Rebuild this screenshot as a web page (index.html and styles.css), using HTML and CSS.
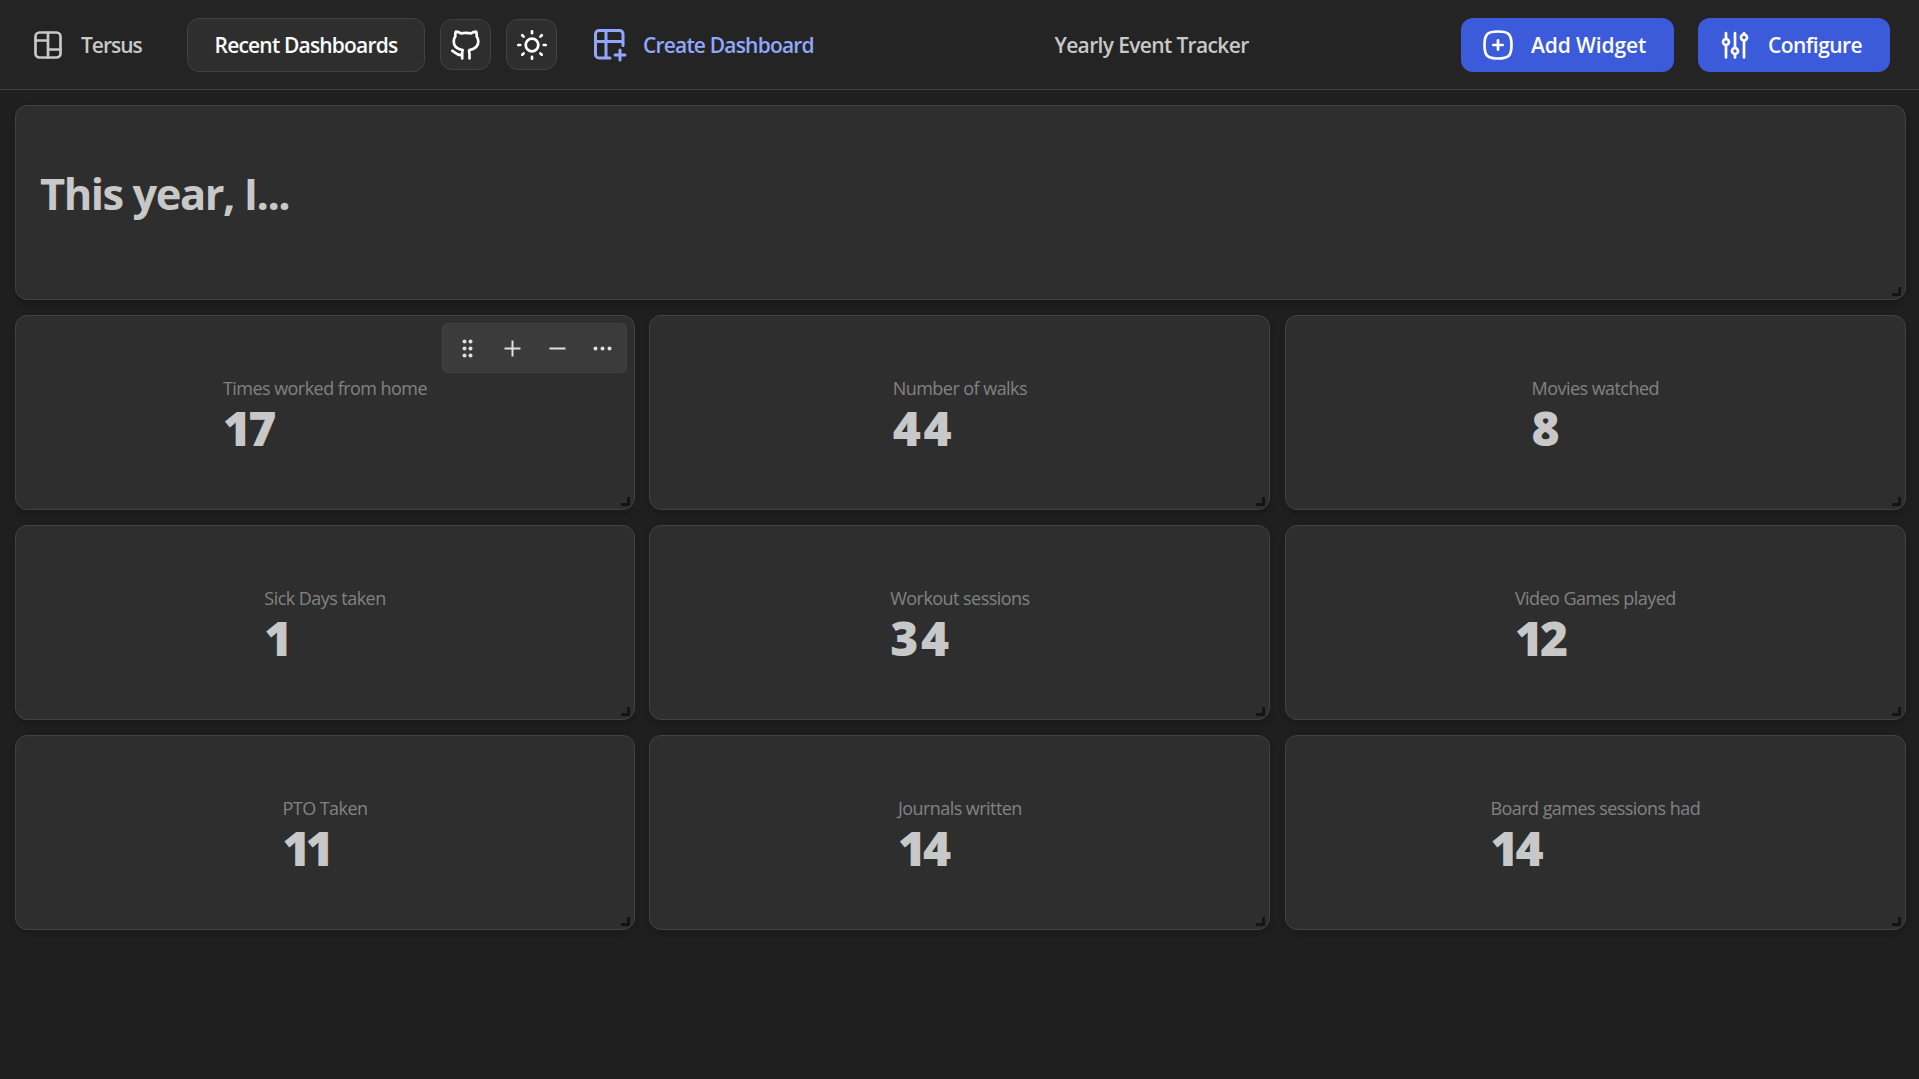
FILE: index.html
```html
<!DOCTYPE html>
<html lang="en">
<head>
<meta charset="utf-8">
<title>Tersus</title>
<link rel="stylesheet" href="styles.css">
</head>
<body>
<header class="topbar">
  <div class="brand">
    <svg class="icon brand-icon" viewBox="0 0 30 30"><rect x="2.5" y="2.5" width="25" height="25" rx="4"/><path d="M15 2.5v25M2.5 10.5H15M15 19.5h12.500"/></svg>
    <span class="t-brand">Tersus</span>
  </div>
  <button class="btn btn-recent"><span class="t-recent">Recent Dashboards</span></button>
  <button class="btn-square" aria-label="GitHub">
    <svg class="icon" viewBox="0 0 30 30"><path d="M11.200 28.500v-4.500c0-1.500-.2-2.800.5-3.800-5.500-1-9-3.700-9-8.700 0-2.300.6-3.700 1.700-5.200-.2-1.500-.2-3.200.5-4.700 2 .1 3.500.7 4.700 1.700 3.500-.6 7.300-.6 10.800 0 1.200-1 2.700-1.600 4.700-1.700.7 1.500.7 3.200.5 4.700 1.100 1.500 1.700 2.900 1.700 5.200 0 5-3.500 7.700-9 8.700-.7.400.2 2.300.2 3.800v4.500M1.300 20.800c2.500 1 3.500 4.700 9.700 4.200"/></svg>
  </button>
  <button class="btn-square" aria-label="Theme">
    <svg class="icon sun" viewBox="0 0 30 30"><circle cx="15" cy="15" r="6.300"/><path d="M15 1.300v1.900M15 26.800v1.900M1.300 15h1.900M26.800 15h1.900M5.300 5.300l1.300 1.300M23.400 23.400l1.300 1.300M5.300 24.700l1.300-1.300M23.400 6.600l1.300-1.300"/></svg>
  </button>
  <div class="create">
    <svg class="icon create-icon" viewBox="0 0 33 33"><path d="M16 29H5a3.500 3.500 0 0 1-3.500-3.500v-20.500A3.500 3.500 0 0 1 5 1.500h20.500a3.500 3.500 0 0 1 3.500 3.500v11.500M1.500 12.500h27.500M12 1.500v27.500M26 21v10M21 26h10"/></svg>
    <span class="t-create">Create Dashboard</span>
  </div>
  <div class="page-title"><span class="t-title">Yearly Event Tracker</span></div>
  <button class="btn btn-primary btn-add">
    <svg class="icon" viewBox="0 0 30 30"><path d="M15 1.500c10.800 0 13.500 2.700 13.500 13.500S25.800 28.500 15 28.500 1.500 25.800 1.500 15 4.200 1.500 15 1.500zM10.300 15h9.400M15 10.300v9.400"/></svg>
    <span class="t-add">Add Widget</span>
  </button>
  <button class="btn btn-primary btn-configure">
    <svg class="icon" viewBox="0 0 30 30"><path d="M6 3v6M6 15v12.500M15 3v15M15 24v3.500M24 3v1.500M24 10.500v17"/><circle cx="6" cy="12" r="3"/><circle cx="15" cy="21" r="3"/><circle cx="24" cy="7.500" r="3"/></svg>
    <span class="t-configure">Configure</span>
  </button>
</header>
<main class="grid">
  <section class="card card-wide"><h1 class="heading">This year, I...</h1></section>
  <section class="card">
    <div class="stat"><span class="label">Times worked from home</span><span class="value value-snug">17</span></div>
    <div class="toolbar">
      <svg class="tool" viewBox="0 0 23 23"><g fill="currentColor"><circle cx="8.500" cy="4.500" r="2"/><circle cx="14.500" cy="4.500" r="2"/><circle cx="8.500" cy="11.500" r="2"/><circle cx="14.500" cy="11.500" r="2"/><circle cx="8.500" cy="18.500" r="2"/><circle cx="14.500" cy="18.500" r="2"/></g></svg>
      <svg class="tool" viewBox="0 0 23 23"><path d="M3.500 11.500h16M11.500 3.500v16" stroke="currentColor" stroke-width="2"/></svg>
      <svg class="tool" viewBox="0 0 23 23"><path d="M3.500 11.500h16" stroke="currentColor" stroke-width="2"/></svg>
      <svg class="tool" viewBox="0 0 23 23"><g fill="currentColor"><circle cx="4.500" cy="11.500" r="2"/><circle cx="11.500" cy="11.500" r="2"/><circle cx="18.500" cy="11.500" r="2"/></g></svg>
    </div>
  </section>
  <section class="card"><div class="stat"><span class="label">Number of walks</span><span class="value value-loose">44</span></div></section>
  <section class="card"><div class="stat"><span class="label">Movies watched</span><span class="value">8</span></div></section>
  <section class="card"><div class="stat"><span class="label">Sick Days taken</span><span class="value">1</span></div></section>
  <section class="card"><div class="stat"><span class="label">Workout sessions</span><span class="value value-loose">34</span></div></section>
  <section class="card"><div class="stat"><span class="label">Video Games played</span><span class="value value-snug">12</span></div></section>
  <section class="card"><div class="stat"><span class="label">PTO Taken</span><span class="value value-tight">11</span></div></section>
  <section class="card"><div class="stat"><span class="label">Journals written</span><span class="value value-snug">14</span></div></section>
  <section class="card"><div class="stat"><span class="label">Board games sessions had</span><span class="value value-snug">14</span></div></section>
</main>
</body>
</html>
```
FILE: styles.css
```css
*, *::after { box-sizing: border-box; }
body {
  margin: 0;
  height: 100vh;
  overflow: hidden;
  background: #1f1f1f;
  color: #c8c8c8;
  font-family: "Open Sans", "Noto Sans", sans-serif;
}
button { margin: 0; font: inherit; color: #fff; }
.topbar {
  display: flex;
  align-items: center;
  height: 90px;
  padding: 0 29px 0 33px;
  background: #242424;
  border-bottom: 1px solid #424242;
  font-size: 21px;
  font-weight: 600;
  letter-spacing: -.65px;
  white-space: nowrap;
}
.icon {
  width: 30px;
  height: 30px;
  flex: none;
  fill: none;
  stroke: currentColor;
  stroke-width: 2.700;
  stroke-linecap: round;
  stroke-linejoin: round;
}
.brand { display: flex; align-items: center; gap: 18px; width: 154px; }
.t-brand { letter-spacing: -1px; }
.t-recent, .t-create { letter-spacing: -.82px; }
.t-add { letter-spacing: -.1px; }
.t-configure { letter-spacing: -.55px; }
.btn {
  display: flex;
  align-items: center;
  height: 54px;
  border: 1px solid #424242;
  border-radius: 12px;
  background: #2e2e2e;
  letter-spacing: inherit;
}
.btn-recent { width: 238px; padding: 0; justify-content: center; }
.btn-square {
  display: flex;
  align-items: center;
  justify-content: center;
  width: 51px;
  height: 51px;
  margin-left: 15px;
  padding: 0;
  border: 1px solid #424242;
  border-radius: 12px;
  background: #2e2e2e;
}
.create { display: flex; align-items: center; gap: 16px; width: 256px; margin-left: 37px; color: #91a7ff; }
.create-icon { width: 33px; height: 33px; position: relative; top: 1px; stroke-width: 3; }
.page-title { flex: 1; text-align: center; padding-right: 8px; }
.btn-primary { border: 0; background: #3b5bdb; padding: 0 0 0 22px; gap: 18px; }
.btn-add { width: 213px; }
.btn-configure { width: 192px; margin-left: 24px; }

.grid {
  display: grid;
  grid-template-columns: 620px 621px 621px;
  grid-auto-rows: 195px;
  gap: 15px 14.400px;
  padding: 15px;
}
.card {
  position: relative;
  display: flex;
  align-items: center;
  justify-content: center;
  background: #2e2e2e;
  border: 1px solid #424242;
  border-radius: 12px;
  box-shadow: 0 2px 5px rgba(0, 0, 0, .12), 0 8px 12px -4px rgba(0, 0, 0, .12);
}
.card::after {
  content: "";
  position: absolute;
  right: 4px;
  bottom: 3px;
  width: 9px;
  height: 9px;
  border-right: 3px solid #141414;
  border-bottom: 3px solid #141414;
}
.card-wide { grid-column: 1 / -1; justify-content: flex-start; padding-left: 24px; }
.heading { margin: 0 0 17px; font-size: 43.500px; line-height: 60px; font-weight: 700; letter-spacing: -1.500px; white-space: nowrap; }
.stat { display: flex; flex-direction: column; align-items: flex-start; padding-top: 1px; white-space: nowrap; }
.label { font-size: 18px; line-height: 28px; letter-spacing: -.55px; color: #828282; }
.value { font-size: 48px; line-height: 51px; font-weight: 800; }
.value-tight { letter-spacing: -5px; }
.value-snug { letter-spacing: -3px; }
.value-loose { letter-spacing: 2.500px; }
.toolbar {
  position: absolute;
  top: 7px;
  right: 7px;
  display: flex;
  align-items: center;
  gap: 22px;
  height: 50px;
  width: 185px;
  padding-left: 12.500px;
  border: 1px solid #424242;
  border-radius: 6px;
  background: #3b3b3b;
  color: #e0dfe6;
}
.tool { width: 23px; height: 23px; flex: none; }
```
